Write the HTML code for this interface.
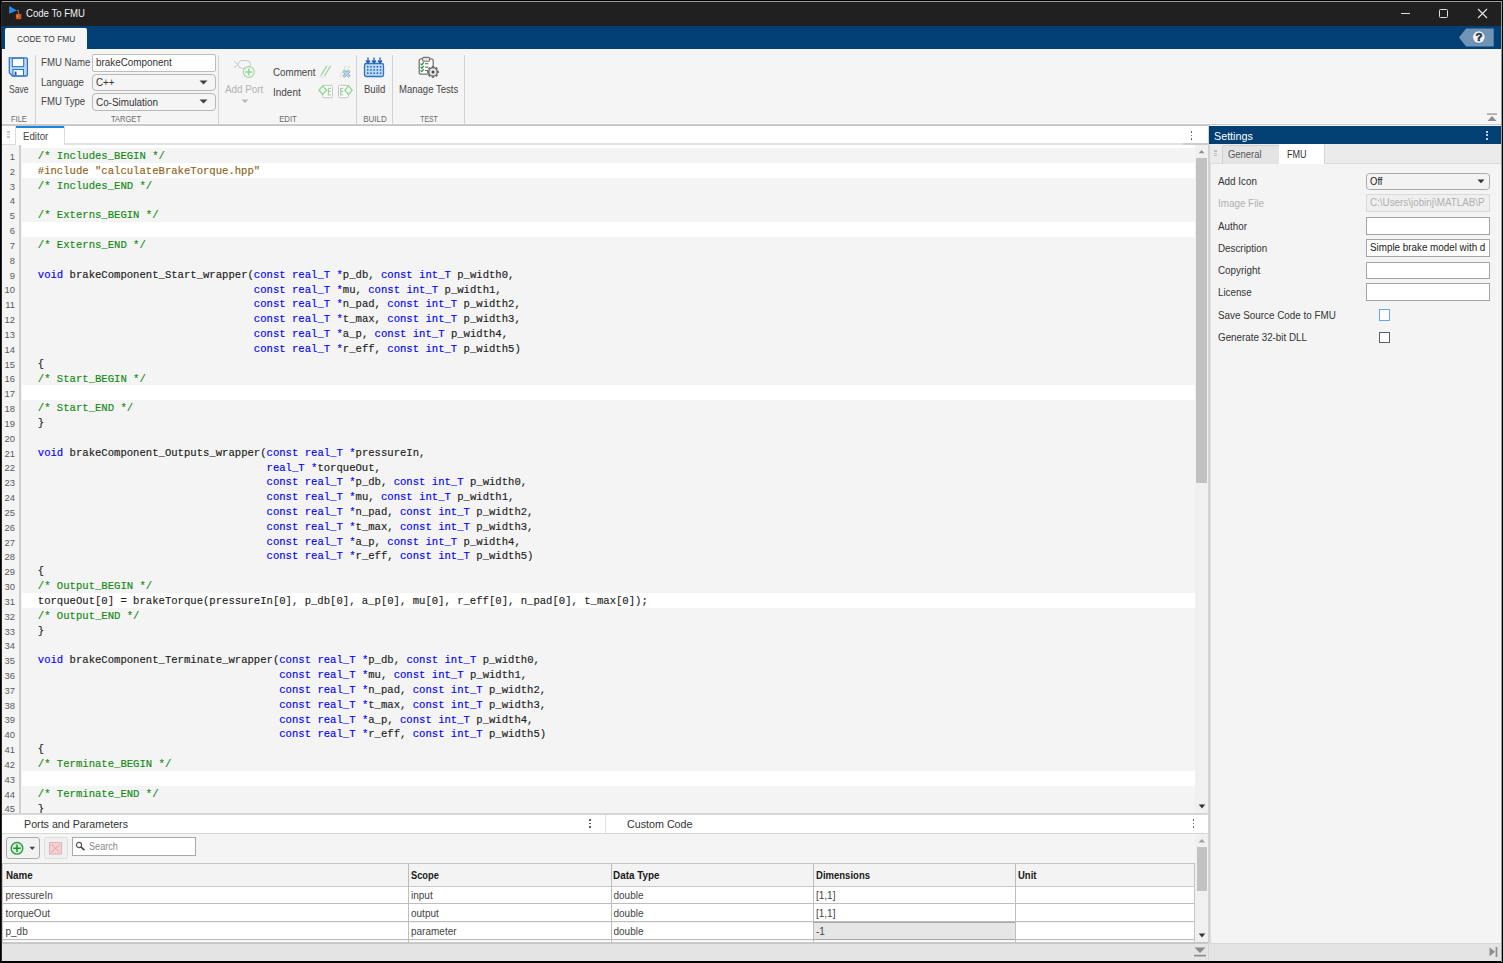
<!DOCTYPE html><html><head><meta charset="utf-8"><style>
*{margin:0;padding:0}
html,body{width:1503px;height:963px;overflow:hidden;background:#000}
.a{position:absolute;display:block}
.t{position:absolute;white-space:pre;transform-origin:0 0}
</style></head><body><div class="a" style="left:0px;top:0px;width:1503px;height:963px;background:#000;"></div><div class="a" style="left:1px;top:1px;width:1501px;height:1px;background:#9a9a9a;"></div><div class="a" style="left:1501px;top:1px;width:1px;height:961px;background:#9a9a9a;"></div><div class="a" style="left:1px;top:1px;width:1px;height:961px;background:#2a2a2a;"></div><div class="a" style="left:2px;top:2px;width:1499px;height:959px;background:#f4f4f4;"></div><div class="a" style="left:2px;top:2px;width:1499px;height:24px;background:#202020;"></div><svg class="a" style="left:4px;top:2px;" width="24" height="22" viewBox="4 2 24 22"><path d="M9.2 6 L16.8 10.4 L9.2 13.8 Z" fill="#2b8de6"/><path d="M16.8 10.4 H18.4 V13.9" stroke="#8a8a8a" stroke-width="0.9" fill="none"/><rect x="15.9" y="13.9" width="5.3" height="5.3" fill="#d9551c"/><rect x="17" y="15.2" width="0.9" height="1.8" fill="#c8d070"/></svg><div class="t" style="left:26.30px;top:7.81px;font-size:10.5px;line-height:10.5px;color:#f2f2f2;font-family:'Liberation Sans', sans-serif;transform:scaleX(0.9134);">Code To FMU</div><div class="a" style="left:1401px;top:13px;width:9px;height:1px;background:#e0e0e0;"></div><div class="a" style="left:1439px;top:9px;width:9px;height:9px;border:1px solid #e0e0e0;border-radius:1.5px;box-sizing:border-box;"></div><svg class="a" style="left:1477px;top:8px;" width="11" height="11" viewBox="0 0 11 11"><path d="M1 1 L10 10 M10 1 L1 10" stroke="#e8e8e8" stroke-width="1.1"/></svg><div class="a" style="left:2px;top:26px;width:1499px;height:23px;background:#023f74;"></div><div class="a" style="left:5px;top:28px;width:82px;height:21px;background:#f5f5f5;border-top:1px solid #ffffff;border-radius:2px 2px 0 0;box-sizing:border-box;"></div><div class="t" style="left:16.60px;top:34.30px;font-size:9.8px;line-height:9.8px;color:#3c3c3c;font-family:'Liberation Sans', sans-serif;transform:scaleX(0.8544);">CODE TO FMU</div><svg class="a" style="left:1458px;top:28px;" width="36" height="19" viewBox="0 0 36 19"><path d="M1 9.5 L8 0.5 L35.7 0.5 L35.7 18.5 L8 18.5 Z" fill="#7094b6"/><circle cx="20.8" cy="9.6" r="6.2" fill="#5d7fa6"/><circle cx="20.8" cy="9.1" r="5.9" fill="#f4f4f4"/><text x="20.9" y="13.3" font-size="11.5" font-weight="700" text-anchor="middle" fill="#26384c" stroke="#26384c" stroke-width="0.6" font-family="Liberation Sans">?</text></svg><div class="a" style="left:2px;top:49px;width:1499px;height:75px;background:#f5f5f5;"></div><div class="a" style="left:2px;top:123px;width:1499px;height:1px;background:#fbfbfb;"></div><div class="a" style="left:2px;top:124px;width:1499px;height:2px;background:#c9c9c9;"></div><svg class="a" style="left:1486px;top:113px;" width="12" height="9" viewBox="0 0 12 9"><rect x="1" y="0.5" width="10" height="1.2" fill="#8c8c8c"/><path d="M1.5 8 L6 3 L10.5 8 Z" fill="#8c8c8c"/></svg><div class="a" style="left:35px;top:55px;width:1px;height:69px;background:#d2d2d2;"></div><div class="a" style="left:218px;top:55px;width:1px;height:69px;background:#d2d2d2;"></div><div class="a" style="left:356px;top:55px;width:1px;height:69px;background:#d2d2d2;"></div><div class="a" style="left:392px;top:55px;width:1px;height:69px;background:#d2d2d2;"></div><div class="a" style="left:464px;top:55px;width:1px;height:69px;background:#d2d2d2;"></div><svg class="a" style="left:6px;top:54px;" width="26" height="26" viewBox="6 54 26 26"><path d="M9.3 57.9 H26.3 Q27.4 57.9 27.4 59 V74.9 Q27.4 76 26.3 76 H12.5 L9.3 72.8 Z" fill="#bfdcf7" stroke="#2f74c8" stroke-width="1.3"/><rect x="12.3" y="58.3" width="11.4" height="8.4" fill="#ffffff" stroke="#2f74c8" stroke-width="1.1"/><rect x="12.9" y="69.5" width="10.6" height="6.3" fill="#ffffff" stroke="#2f74c8" stroke-width="1.1"/><rect x="14.6" y="71.6" width="1.9" height="4" fill="#1f5fb0"/></svg><div class="t" style="left:8.60px;top:84.88px;font-size:10.3px;line-height:10.3px;color:#454545;font-family:'Liberation Sans', sans-serif;transform:scaleX(0.8261);">Save</div><div class="t" style="left:10.50px;top:113.80px;font-size:9.8px;line-height:9.8px;color:#6a6a6a;font-family:'Liberation Sans', sans-serif;transform:scaleX(0.7680);">FILE</div><div class="t" style="left:40.50px;top:58.13px;font-size:10px;line-height:10px;color:#454545;font-family:'Liberation Sans', sans-serif;transform:scaleX(0.9643);">FMU Name</div><div class="t" style="left:40.50px;top:77.83px;font-size:10px;line-height:10px;color:#454545;font-family:'Liberation Sans', sans-serif;transform:scaleX(0.9663);">Language</div><div class="t" style="left:40.50px;top:97.33px;font-size:10px;line-height:10px;color:#454545;font-family:'Liberation Sans', sans-serif;transform:scaleX(0.9622);">FMU Type</div><div class="a" style="left:91.5px;top:53.5px;width:124.5px;height:18px;background:#ffffff;border:1px solid #bdbdbd;border-radius:2px;box-sizing:border-box;"></div><div class="t" style="left:95.60px;top:58.13px;font-size:10px;line-height:10px;color:#333;font-family:'Liberation Sans', sans-serif;transform:scaleX(0.9880);">brakeComponent</div><div class="a" style="left:91.5px;top:73.5px;width:124.5px;height:17.5px;background:#f5f5f5;border:1px solid #b8b8b8;border-radius:4px;box-sizing:border-box;"></div><div class="t" style="left:95.60px;top:77.83px;font-size:10px;line-height:10px;color:#333;font-family:'Liberation Sans', sans-serif;transform:scaleX(0.9785);">C++</div><svg class="a" style="left:199px;top:79.5px;" width="9" height="5" viewBox="0 0 9 5"><path d="M0.5 0.5 L8.5 0.5 L4.5 4.5 Z" fill="#404040"/></svg><div class="a" style="left:91.5px;top:93.3px;width:124.5px;height:17.5px;background:#f5f5f5;border:1px solid #b8b8b8;border-radius:4px;box-sizing:border-box;"></div><div class="t" style="left:95.60px;top:97.63px;font-size:10px;line-height:10px;color:#333;font-family:'Liberation Sans', sans-serif;transform:scaleX(0.9871);">Co-Simulation</div><svg class="a" style="left:199px;top:99.3px;" width="9" height="5" viewBox="0 0 9 5"><path d="M0.5 0.5 L8.5 0.5 L4.5 4.5 Z" fill="#404040"/></svg><div class="t" style="left:111.00px;top:113.80px;font-size:9.8px;line-height:9.8px;color:#6a6a6a;font-family:'Liberation Sans', sans-serif;transform:scaleX(0.7689);">TARGET</div><svg class="a" style="left:228px;top:54px;" width="30" height="26" viewBox="228 54 30 26"><path d="M234 61.3 L237.8 64.5 L234 67.8" stroke="#c4c4c4" stroke-width="1" fill="none"/><rect x="238.2" y="60.5" width="12.3" height="7.9" rx="3.9" fill="none" stroke="#c8c8c8" stroke-width="1"/><circle cx="248.8" cy="72" r="5.4" fill="#effbef" stroke="#a4d6a4" stroke-width="1.2"/><path d="M248.8 68.6 V75.4 M245.4 72 H252.2" stroke="#98cf98" stroke-width="1.4"/></svg><div class="t" style="left:225.00px;top:84.73px;font-size:10px;line-height:10px;color:#b3b3b3;font-family:'Liberation Sans', sans-serif;transform:scaleX(0.9840);">Add Port</div><svg class="a" style="left:241px;top:99px;" width="8" height="5" viewBox="0 0 8 5"><path d="M0.5 0.5 L7.5 0.5 L4 4 Z" fill="#b8b8b8"/></svg><div class="t" style="left:272.60px;top:68.33px;font-size:10px;line-height:10px;color:#454545;font-family:'Liberation Sans', sans-serif;transform:scaleX(0.9802);">Comment</div><div class="t" style="left:272.60px;top:87.93px;font-size:10px;line-height:10px;color:#454545;font-family:'Liberation Sans', sans-serif;transform:scaleX(0.9960);">Indent</div><svg class="a" style="left:315px;top:62px;" width="40" height="38" viewBox="315 62 40 38"><path d="M320.8 75.8 L326.8 65.9 M324.5 75.8 L330.6 65.9" stroke="#a6d6a6" stroke-width="1.4"/><path d="M319.5 77.3 H326.5" stroke="#e2e2e2" stroke-width="0.8"/><path d="M340.2 75.8 L346.2 65.9 M343.4 75.8 L349.7 65.9" stroke="#cfe9cf" stroke-width="1.2"/><path d="M339 77.3 H344" stroke="#e6e6e6" stroke-width="0.8"/><path d="M343.6 70.8 L349.6 76.8 M349.6 70.8 L343.6 76.8" stroke="#8a9aa8" stroke-width="3"/><path d="M343.6 70.8 L349.6 76.8 M349.6 70.8 L343.6 76.8" stroke="#b5d6f0" stroke-width="1.8"/><rect x="322.6" y="85.3" width="9.8" height="12.4" rx="1.3" fill="#ffffff" stroke="#c4c4c4" stroke-width="1"/><path d="M327.8 88.3 H331 M327.8 91.5 H331 M327.8 94.8 H331 M328.3 88.3 V94.8" stroke="#a0d4a0" stroke-width="1.3"/><path d="M319 90.2 L322.7 85.9 L326.4 90.2 L322.7 94.5 Z" fill="#f0fbf0" stroke="#9ed49e" stroke-width="1.4"/><rect x="338.5" y="85.3" width="9.8" height="12.4" rx="1.3" fill="#ffffff" stroke="#c4c4c4" stroke-width="1"/><path d="M340.2 88.3 H343.4 M340.2 91.5 H343.4 M340.2 94.8 H343.4 M340.7 88.3 V94.8" stroke="#a0d4a0" stroke-width="1.3"/><path d="M344.8 90.2 L348.5 85.9 L352.2 90.2 L348.5 94.5 Z" fill="#f0fbf0" stroke="#9ed49e" stroke-width="1.4"/></svg><div class="t" style="left:287.50px;top:113.80px;font-size:9.8px;line-height:9.8px;color:#6a6a6a;font-family:'Liberation Sans', sans-serif;transform:translateX(-50%) scaleX(0.7927);transform-origin:50% 0;">EDIT</div><svg class="a" style="left:363px;top:57px;" width="22" height="21" viewBox="0 0 22 21"><rect x="1.5" y="6.5" width="19" height="13" rx="1.8" fill="#bcdaf6" stroke="#2f74c8" stroke-width="1.3"/><rect x="4.0" y="9.0" width="1.5" height="1.5" fill="#1f5fb0"/><rect x="7.2" y="9.0" width="1.5" height="1.5" fill="#1f5fb0"/><rect x="10.4" y="9.0" width="1.5" height="1.5" fill="#1f5fb0"/><rect x="13.6" y="9.0" width="1.5" height="1.5" fill="#1f5fb0"/><rect x="16.8" y="9.0" width="1.5" height="1.5" fill="#1f5fb0"/><rect x="4.0" y="12.2" width="1.5" height="1.5" fill="#1f5fb0"/><rect x="7.2" y="12.2" width="1.5" height="1.5" fill="#1f5fb0"/><rect x="10.4" y="12.2" width="1.5" height="1.5" fill="#1f5fb0"/><rect x="13.6" y="12.2" width="1.5" height="1.5" fill="#1f5fb0"/><rect x="16.8" y="12.2" width="1.5" height="1.5" fill="#1f5fb0"/><rect x="4.0" y="15.4" width="1.5" height="1.5" fill="#1f5fb0"/><rect x="7.2" y="15.4" width="1.5" height="1.5" fill="#1f5fb0"/><rect x="10.4" y="15.4" width="1.5" height="1.5" fill="#1f5fb0"/><rect x="13.6" y="15.4" width="1.5" height="1.5" fill="#1f5fb0"/><rect x="16.8" y="15.4" width="1.5" height="1.5" fill="#1f5fb0"/><path d="M5 0.5 V5.5 M3 3.5 L5 6 L7 3.5" stroke="#1f5fb0" stroke-width="1.3" fill="none"/><path d="M11 0.5 V5.5 M9 3.5 L11 6 L13 3.5" stroke="#1f5fb0" stroke-width="1.3" fill="none"/><path d="M17 0.5 V5.5 M15 3.5 L17 6 L19 3.5" stroke="#1f5fb0" stroke-width="1.3" fill="none"/></svg><div class="t" style="left:363.80px;top:85.03px;font-size:10px;line-height:10px;color:#454545;font-family:'Liberation Sans', sans-serif;transform:scaleX(0.9528);">Build</div><div class="t" style="left:374.50px;top:113.80px;font-size:9.8px;line-height:9.8px;color:#6a6a6a;font-family:'Liberation Sans', sans-serif;transform:translateX(-50%) scaleX(0.8212);transform-origin:50% 0;">BUILD</div><svg class="a" style="left:410px;top:52px;" width="35" height="30" viewBox="410 52 35 30"><rect x="419.2" y="58.9" width="14" height="15.3" rx="2" fill="#ffffff" stroke="#777" stroke-width="1.3"/><rect x="422.6" y="57.4" width="7" height="3.9" rx="1" fill="#e2e2e2" stroke="#777" stroke-width="1.1"/><path d="M420.6 63.6 L421.8 64.8 L423.8 62.4" stroke="#23963a" stroke-width="1.3" fill="none"/><path d="M425 63.7 H428.4" stroke="#6a6a6a" stroke-width="1.1"/><path d="M420.6 67.0 L421.8 68.2 L423.8 65.8" stroke="#23963a" stroke-width="1.3" fill="none"/><path d="M425 67.1 H428.4" stroke="#6a6a6a" stroke-width="1.1"/><path d="M420.6 70.4 L421.8 71.6 L423.8 69.2" stroke="#23963a" stroke-width="1.3" fill="none"/><path d="M425 70.5 H428.4" stroke="#6a6a6a" stroke-width="1.1"/><rect x="431.80" y="66.00" width="2.4" height="3" fill="#6a6a6a" transform="rotate(0 433 71.9)"/><rect x="431.80" y="66.00" width="2.4" height="3" fill="#6a6a6a" transform="rotate(45 433 71.9)"/><rect x="431.80" y="66.00" width="2.4" height="3" fill="#6a6a6a" transform="rotate(90 433 71.9)"/><rect x="431.80" y="66.00" width="2.4" height="3" fill="#6a6a6a" transform="rotate(135 433 71.9)"/><rect x="431.80" y="66.00" width="2.4" height="3" fill="#6a6a6a" transform="rotate(180 433 71.9)"/><rect x="431.80" y="66.00" width="2.4" height="3" fill="#6a6a6a" transform="rotate(225 433 71.9)"/><rect x="431.80" y="66.00" width="2.4" height="3" fill="#6a6a6a" transform="rotate(270 433 71.9)"/><rect x="431.80" y="66.00" width="2.4" height="3" fill="#6a6a6a" transform="rotate(315 433 71.9)"/><circle cx="433" cy="71.9" r="4.2" fill="#e4e4e4" stroke="#6a6a6a" stroke-width="1.3"/><circle cx="433" cy="71.9" r="1.5" fill="#4a4a4a"/></svg><div class="t" style="left:399.00px;top:85.03px;font-size:10px;line-height:10px;color:#454545;font-family:'Liberation Sans', sans-serif;transform:scaleX(0.9536);">Manage Tests</div><div class="t" style="left:428.70px;top:113.80px;font-size:9.8px;line-height:9.8px;color:#6a6a6a;font-family:'Liberation Sans', sans-serif;transform:translateX(-50%) scaleX(0.6987);transform-origin:50% 0;">TEST</div><div class="a" style="left:2px;top:126px;width:1206px;height:19px;background:#ffffff;"></div><div class="a" style="left:2px;top:126px;width:14px;height:19px;background:#ffffff;border-right:1px solid #dcdcdc;border-bottom:1px solid #dcdcdc;box-sizing:border-box;"></div><div class="a" style="left:7.2px;top:131.4px;width:2.8px;height:1.8px;background:#c4c4c4;"></div><div class="a" style="left:7.2px;top:133.6px;width:2.8px;height:1.8px;background:#c4c4c4;"></div><div class="a" style="left:7.2px;top:135.8px;width:2.8px;height:1.8px;background:#c4c4c4;"></div><div class="a" style="left:16px;top:126px;width:48px;height:2px;background:#1a86e0;"></div><div class="a" style="left:64px;top:126px;width:1px;height:19px;background:#dcdcdc;"></div><div class="a" style="left:65px;top:143px;width:1130px;height:2px;background:#e3e3e3;"></div><div class="a" style="left:1183px;top:143px;width:25px;height:2px;background:#cdcdcd;"></div><div class="t" style="left:22.60px;top:132.33px;font-size:10px;line-height:10px;color:#454545;font-family:'Liberation Sans', sans-serif;transform:scaleX(0.9684);">Editor</div><div class="a" style="left:1190.8px;top:131.2px;width:1.7px;height:1.7px;background:#444444;border-radius:50%;"></div><div class="a" style="left:1190.8px;top:134.6px;width:1.7px;height:1.7px;background:#444444;border-radius:50%;"></div><div class="a" style="left:1190.8px;top:138.0px;width:1.7px;height:1.7px;background:#444444;border-radius:50%;"></div><div class="a" style="left:2px;top:144.5px;width:1193px;height:668.5px;background:#f4f4f4;"></div><div class="a" style="left:22px;top:144.5px;width:1173px;height:3.6999999999999886px;background:#ffffff;"></div><div class="a" style="left:19px;top:144.5px;width:2px;height:668.5px;background:#cfcfcf;"></div><div class="a" style="left:0;top:0;width:1195px;height:813px;overflow:hidden"><div class="a" style="left:22px;top:163.03px;width:1173px;height:14.83px;background:#ffffff;"></div><div class="a" style="left:22px;top:222.35px;width:1173px;height:14.83px;background:#ffffff;"></div><div class="a" style="left:22px;top:385.48px;width:1173px;height:14.83px;background:#ffffff;"></div><div class="a" style="left:22px;top:593.1px;width:1173px;height:14.83px;background:#ffffff;"></div><div class="a" style="left:22px;top:771.06px;width:1173px;height:14.83px;background:#ffffff;"></div><div class="t" style="left:15.00px;top:151.94px;font-size:9.4px;line-height:9.4px;color:#5a5a5a;font-family:'Liberation Sans', sans-serif;text-align:right;width:0;direction:rtl;">1</div><div class="t" style="left:37.80px;top:151.08px;font-size:10.6px;line-height:10.6px;color:#212121;font-family:'Liberation Mono', monospace;letter-spacing:-0.0033px;-webkit-text-stroke:0.15px currentColor;"><span style="color:#138a13">/* Includes_BEGIN */</span></div><div class="t" style="left:15.00px;top:166.77px;font-size:9.4px;line-height:9.4px;color:#5a5a5a;font-family:'Liberation Sans', sans-serif;text-align:right;width:0;direction:rtl;">2</div><div class="t" style="left:37.80px;top:165.91px;font-size:10.6px;line-height:10.6px;color:#212121;font-family:'Liberation Mono', monospace;letter-spacing:-0.0033px;-webkit-text-stroke:0.15px currentColor;"><span style="color:#8e6414">#include &quot;calculateBrakeTorque.hpp&quot;</span></div><div class="t" style="left:15.00px;top:181.60px;font-size:9.4px;line-height:9.4px;color:#5a5a5a;font-family:'Liberation Sans', sans-serif;text-align:right;width:0;direction:rtl;">3</div><div class="t" style="left:37.80px;top:180.74px;font-size:10.6px;line-height:10.6px;color:#212121;font-family:'Liberation Mono', monospace;letter-spacing:-0.0033px;-webkit-text-stroke:0.15px currentColor;"><span style="color:#138a13">/* Includes_END */</span></div><div class="t" style="left:15.00px;top:196.43px;font-size:9.4px;line-height:9.4px;color:#5a5a5a;font-family:'Liberation Sans', sans-serif;text-align:right;width:0;direction:rtl;">4</div><div class="t" style="left:15.00px;top:211.26px;font-size:9.4px;line-height:9.4px;color:#5a5a5a;font-family:'Liberation Sans', sans-serif;text-align:right;width:0;direction:rtl;">5</div><div class="t" style="left:37.80px;top:210.40px;font-size:10.6px;line-height:10.6px;color:#212121;font-family:'Liberation Mono', monospace;letter-spacing:-0.0033px;-webkit-text-stroke:0.15px currentColor;"><span style="color:#138a13">/* Externs_BEGIN */</span></div><div class="t" style="left:15.00px;top:226.09px;font-size:9.4px;line-height:9.4px;color:#5a5a5a;font-family:'Liberation Sans', sans-serif;text-align:right;width:0;direction:rtl;">6</div><div class="t" style="left:15.00px;top:240.92px;font-size:9.4px;line-height:9.4px;color:#5a5a5a;font-family:'Liberation Sans', sans-serif;text-align:right;width:0;direction:rtl;">7</div><div class="t" style="left:37.80px;top:240.06px;font-size:10.6px;line-height:10.6px;color:#212121;font-family:'Liberation Mono', monospace;letter-spacing:-0.0033px;-webkit-text-stroke:0.15px currentColor;"><span style="color:#138a13">/* Externs_END */</span></div><div class="t" style="left:15.00px;top:255.75px;font-size:9.4px;line-height:9.4px;color:#5a5a5a;font-family:'Liberation Sans', sans-serif;text-align:right;width:0;direction:rtl;">8</div><div class="t" style="left:15.00px;top:270.58px;font-size:9.4px;line-height:9.4px;color:#5a5a5a;font-family:'Liberation Sans', sans-serif;text-align:right;width:0;direction:rtl;">9</div><div class="t" style="left:37.80px;top:269.72px;font-size:10.6px;line-height:10.6px;color:#212121;font-family:'Liberation Mono', monospace;letter-spacing:-0.0033px;-webkit-text-stroke:0.15px currentColor;"><span style="color:#0000ff">void</span> brakeComponent_Start_wrapper(<span style="color:#0000ff">const</span> <span style="color:#0000ff">real_T</span> <span style="color:#0000ff">*</span>p_db, <span style="color:#0000ff">const</span> <span style="color:#0000ff">int_T</span> p_width0,</div><div class="t" style="left:15.00px;top:285.41px;font-size:9.4px;line-height:9.4px;color:#5a5a5a;font-family:'Liberation Sans', sans-serif;text-align:right;width:0;direction:rtl;">10</div><div class="t" style="left:37.80px;top:284.55px;font-size:10.6px;line-height:10.6px;color:#212121;font-family:'Liberation Mono', monospace;letter-spacing:-0.0033px;-webkit-text-stroke:0.15px currentColor;">                                  <span style="color:#0000ff">const</span> <span style="color:#0000ff">real_T</span> <span style="color:#0000ff">*</span>mu, <span style="color:#0000ff">const</span> <span style="color:#0000ff">int_T</span> p_width1,</div><div class="t" style="left:15.00px;top:300.24px;font-size:9.4px;line-height:9.4px;color:#5a5a5a;font-family:'Liberation Sans', sans-serif;text-align:right;width:0;direction:rtl;">11</div><div class="t" style="left:37.80px;top:299.38px;font-size:10.6px;line-height:10.6px;color:#212121;font-family:'Liberation Mono', monospace;letter-spacing:-0.0033px;-webkit-text-stroke:0.15px currentColor;">                                  <span style="color:#0000ff">const</span> <span style="color:#0000ff">real_T</span> <span style="color:#0000ff">*</span>n_pad, <span style="color:#0000ff">const</span> <span style="color:#0000ff">int_T</span> p_width2,</div><div class="t" style="left:15.00px;top:315.07px;font-size:9.4px;line-height:9.4px;color:#5a5a5a;font-family:'Liberation Sans', sans-serif;text-align:right;width:0;direction:rtl;">12</div><div class="t" style="left:37.80px;top:314.21px;font-size:10.6px;line-height:10.6px;color:#212121;font-family:'Liberation Mono', monospace;letter-spacing:-0.0033px;-webkit-text-stroke:0.15px currentColor;">                                  <span style="color:#0000ff">const</span> <span style="color:#0000ff">real_T</span> <span style="color:#0000ff">*</span>t_max, <span style="color:#0000ff">const</span> <span style="color:#0000ff">int_T</span> p_width3,</div><div class="t" style="left:15.00px;top:329.90px;font-size:9.4px;line-height:9.4px;color:#5a5a5a;font-family:'Liberation Sans', sans-serif;text-align:right;width:0;direction:rtl;">13</div><div class="t" style="left:37.80px;top:329.04px;font-size:10.6px;line-height:10.6px;color:#212121;font-family:'Liberation Mono', monospace;letter-spacing:-0.0033px;-webkit-text-stroke:0.15px currentColor;">                                  <span style="color:#0000ff">const</span> <span style="color:#0000ff">real_T</span> <span style="color:#0000ff">*</span>a_p, <span style="color:#0000ff">const</span> <span style="color:#0000ff">int_T</span> p_width4,</div><div class="t" style="left:15.00px;top:344.73px;font-size:9.4px;line-height:9.4px;color:#5a5a5a;font-family:'Liberation Sans', sans-serif;text-align:right;width:0;direction:rtl;">14</div><div class="t" style="left:37.80px;top:343.87px;font-size:10.6px;line-height:10.6px;color:#212121;font-family:'Liberation Mono', monospace;letter-spacing:-0.0033px;-webkit-text-stroke:0.15px currentColor;">                                  <span style="color:#0000ff">const</span> <span style="color:#0000ff">real_T</span> <span style="color:#0000ff">*</span>r_eff, <span style="color:#0000ff">const</span> <span style="color:#0000ff">int_T</span> p_width5)</div><div class="t" style="left:15.00px;top:359.56px;font-size:9.4px;line-height:9.4px;color:#5a5a5a;font-family:'Liberation Sans', sans-serif;text-align:right;width:0;direction:rtl;">15</div><div class="t" style="left:37.80px;top:358.70px;font-size:10.6px;line-height:10.6px;color:#212121;font-family:'Liberation Mono', monospace;letter-spacing:-0.0033px;-webkit-text-stroke:0.15px currentColor;">{</div><div class="t" style="left:15.00px;top:374.39px;font-size:9.4px;line-height:9.4px;color:#5a5a5a;font-family:'Liberation Sans', sans-serif;text-align:right;width:0;direction:rtl;">16</div><div class="t" style="left:37.80px;top:373.53px;font-size:10.6px;line-height:10.6px;color:#212121;font-family:'Liberation Mono', monospace;letter-spacing:-0.0033px;-webkit-text-stroke:0.15px currentColor;"><span style="color:#138a13">/* Start_BEGIN */</span></div><div class="t" style="left:15.00px;top:389.22px;font-size:9.4px;line-height:9.4px;color:#5a5a5a;font-family:'Liberation Sans', sans-serif;text-align:right;width:0;direction:rtl;">17</div><div class="t" style="left:15.00px;top:404.05px;font-size:9.4px;line-height:9.4px;color:#5a5a5a;font-family:'Liberation Sans', sans-serif;text-align:right;width:0;direction:rtl;">18</div><div class="t" style="left:37.80px;top:403.19px;font-size:10.6px;line-height:10.6px;color:#212121;font-family:'Liberation Mono', monospace;letter-spacing:-0.0033px;-webkit-text-stroke:0.15px currentColor;"><span style="color:#138a13">/* Start_END */</span></div><div class="t" style="left:15.00px;top:418.88px;font-size:9.4px;line-height:9.4px;color:#5a5a5a;font-family:'Liberation Sans', sans-serif;text-align:right;width:0;direction:rtl;">19</div><div class="t" style="left:37.80px;top:418.02px;font-size:10.6px;line-height:10.6px;color:#212121;font-family:'Liberation Mono', monospace;letter-spacing:-0.0033px;-webkit-text-stroke:0.15px currentColor;">}</div><div class="t" style="left:15.00px;top:433.71px;font-size:9.4px;line-height:9.4px;color:#5a5a5a;font-family:'Liberation Sans', sans-serif;text-align:right;width:0;direction:rtl;">20</div><div class="t" style="left:15.00px;top:448.54px;font-size:9.4px;line-height:9.4px;color:#5a5a5a;font-family:'Liberation Sans', sans-serif;text-align:right;width:0;direction:rtl;">21</div><div class="t" style="left:37.80px;top:447.68px;font-size:10.6px;line-height:10.6px;color:#212121;font-family:'Liberation Mono', monospace;letter-spacing:-0.0033px;-webkit-text-stroke:0.15px currentColor;"><span style="color:#0000ff">void</span> brakeComponent_Outputs_wrapper(<span style="color:#0000ff">const</span> <span style="color:#0000ff">real_T</span> <span style="color:#0000ff">*</span>pressureIn,</div><div class="t" style="left:15.00px;top:463.37px;font-size:9.4px;line-height:9.4px;color:#5a5a5a;font-family:'Liberation Sans', sans-serif;text-align:right;width:0;direction:rtl;">22</div><div class="t" style="left:37.80px;top:462.51px;font-size:10.6px;line-height:10.6px;color:#212121;font-family:'Liberation Mono', monospace;letter-spacing:-0.0033px;-webkit-text-stroke:0.15px currentColor;">                                    <span style="color:#0000ff">real_T</span> <span style="color:#0000ff">*</span>torqueOut,</div><div class="t" style="left:15.00px;top:478.20px;font-size:9.4px;line-height:9.4px;color:#5a5a5a;font-family:'Liberation Sans', sans-serif;text-align:right;width:0;direction:rtl;">23</div><div class="t" style="left:37.80px;top:477.34px;font-size:10.6px;line-height:10.6px;color:#212121;font-family:'Liberation Mono', monospace;letter-spacing:-0.0033px;-webkit-text-stroke:0.15px currentColor;">                                    <span style="color:#0000ff">const</span> <span style="color:#0000ff">real_T</span> <span style="color:#0000ff">*</span>p_db, <span style="color:#0000ff">const</span> <span style="color:#0000ff">int_T</span> p_width0,</div><div class="t" style="left:15.00px;top:493.03px;font-size:9.4px;line-height:9.4px;color:#5a5a5a;font-family:'Liberation Sans', sans-serif;text-align:right;width:0;direction:rtl;">24</div><div class="t" style="left:37.80px;top:492.17px;font-size:10.6px;line-height:10.6px;color:#212121;font-family:'Liberation Mono', monospace;letter-spacing:-0.0033px;-webkit-text-stroke:0.15px currentColor;">                                    <span style="color:#0000ff">const</span> <span style="color:#0000ff">real_T</span> <span style="color:#0000ff">*</span>mu, <span style="color:#0000ff">const</span> <span style="color:#0000ff">int_T</span> p_width1,</div><div class="t" style="left:15.00px;top:507.86px;font-size:9.4px;line-height:9.4px;color:#5a5a5a;font-family:'Liberation Sans', sans-serif;text-align:right;width:0;direction:rtl;">25</div><div class="t" style="left:37.80px;top:507.00px;font-size:10.6px;line-height:10.6px;color:#212121;font-family:'Liberation Mono', monospace;letter-spacing:-0.0033px;-webkit-text-stroke:0.15px currentColor;">                                    <span style="color:#0000ff">const</span> <span style="color:#0000ff">real_T</span> <span style="color:#0000ff">*</span>n_pad, <span style="color:#0000ff">const</span> <span style="color:#0000ff">int_T</span> p_width2,</div><div class="t" style="left:15.00px;top:522.69px;font-size:9.4px;line-height:9.4px;color:#5a5a5a;font-family:'Liberation Sans', sans-serif;text-align:right;width:0;direction:rtl;">26</div><div class="t" style="left:37.80px;top:521.83px;font-size:10.6px;line-height:10.6px;color:#212121;font-family:'Liberation Mono', monospace;letter-spacing:-0.0033px;-webkit-text-stroke:0.15px currentColor;">                                    <span style="color:#0000ff">const</span> <span style="color:#0000ff">real_T</span> <span style="color:#0000ff">*</span>t_max, <span style="color:#0000ff">const</span> <span style="color:#0000ff">int_T</span> p_width3,</div><div class="t" style="left:15.00px;top:537.52px;font-size:9.4px;line-height:9.4px;color:#5a5a5a;font-family:'Liberation Sans', sans-serif;text-align:right;width:0;direction:rtl;">27</div><div class="t" style="left:37.80px;top:536.66px;font-size:10.6px;line-height:10.6px;color:#212121;font-family:'Liberation Mono', monospace;letter-spacing:-0.0033px;-webkit-text-stroke:0.15px currentColor;">                                    <span style="color:#0000ff">const</span> <span style="color:#0000ff">real_T</span> <span style="color:#0000ff">*</span>a_p, <span style="color:#0000ff">const</span> <span style="color:#0000ff">int_T</span> p_width4,</div><div class="t" style="left:15.00px;top:552.35px;font-size:9.4px;line-height:9.4px;color:#5a5a5a;font-family:'Liberation Sans', sans-serif;text-align:right;width:0;direction:rtl;">28</div><div class="t" style="left:37.80px;top:551.49px;font-size:10.6px;line-height:10.6px;color:#212121;font-family:'Liberation Mono', monospace;letter-spacing:-0.0033px;-webkit-text-stroke:0.15px currentColor;">                                    <span style="color:#0000ff">const</span> <span style="color:#0000ff">real_T</span> <span style="color:#0000ff">*</span>r_eff, <span style="color:#0000ff">const</span> <span style="color:#0000ff">int_T</span> p_width5)</div><div class="t" style="left:15.00px;top:567.18px;font-size:9.4px;line-height:9.4px;color:#5a5a5a;font-family:'Liberation Sans', sans-serif;text-align:right;width:0;direction:rtl;">29</div><div class="t" style="left:37.80px;top:566.32px;font-size:10.6px;line-height:10.6px;color:#212121;font-family:'Liberation Mono', monospace;letter-spacing:-0.0033px;-webkit-text-stroke:0.15px currentColor;">{</div><div class="t" style="left:15.00px;top:582.01px;font-size:9.4px;line-height:9.4px;color:#5a5a5a;font-family:'Liberation Sans', sans-serif;text-align:right;width:0;direction:rtl;">30</div><div class="t" style="left:37.80px;top:581.15px;font-size:10.6px;line-height:10.6px;color:#212121;font-family:'Liberation Mono', monospace;letter-spacing:-0.0033px;-webkit-text-stroke:0.15px currentColor;"><span style="color:#138a13">/* Output_BEGIN */</span></div><div class="t" style="left:15.00px;top:596.84px;font-size:9.4px;line-height:9.4px;color:#5a5a5a;font-family:'Liberation Sans', sans-serif;text-align:right;width:0;direction:rtl;">31</div><div class="t" style="left:37.80px;top:595.98px;font-size:10.6px;line-height:10.6px;color:#212121;font-family:'Liberation Mono', monospace;letter-spacing:-0.0033px;-webkit-text-stroke:0.15px currentColor;">torqueOut[0] = brakeTorque(pressureIn[0], p_db[0], a_p[0], mu[0], r_eff[0], n_pad[0], t_max[0]);</div><div class="t" style="left:15.00px;top:611.67px;font-size:9.4px;line-height:9.4px;color:#5a5a5a;font-family:'Liberation Sans', sans-serif;text-align:right;width:0;direction:rtl;">32</div><div class="t" style="left:37.80px;top:610.81px;font-size:10.6px;line-height:10.6px;color:#212121;font-family:'Liberation Mono', monospace;letter-spacing:-0.0033px;-webkit-text-stroke:0.15px currentColor;"><span style="color:#138a13">/* Output_END */</span></div><div class="t" style="left:15.00px;top:626.50px;font-size:9.4px;line-height:9.4px;color:#5a5a5a;font-family:'Liberation Sans', sans-serif;text-align:right;width:0;direction:rtl;">33</div><div class="t" style="left:37.80px;top:625.64px;font-size:10.6px;line-height:10.6px;color:#212121;font-family:'Liberation Mono', monospace;letter-spacing:-0.0033px;-webkit-text-stroke:0.15px currentColor;">}</div><div class="t" style="left:15.00px;top:641.33px;font-size:9.4px;line-height:9.4px;color:#5a5a5a;font-family:'Liberation Sans', sans-serif;text-align:right;width:0;direction:rtl;">34</div><div class="t" style="left:15.00px;top:656.16px;font-size:9.4px;line-height:9.4px;color:#5a5a5a;font-family:'Liberation Sans', sans-serif;text-align:right;width:0;direction:rtl;">35</div><div class="t" style="left:37.80px;top:655.30px;font-size:10.6px;line-height:10.6px;color:#212121;font-family:'Liberation Mono', monospace;letter-spacing:-0.0033px;-webkit-text-stroke:0.15px currentColor;"><span style="color:#0000ff">void</span> brakeComponent_Terminate_wrapper(<span style="color:#0000ff">const</span> <span style="color:#0000ff">real_T</span> <span style="color:#0000ff">*</span>p_db, <span style="color:#0000ff">const</span> <span style="color:#0000ff">int_T</span> p_width0,</div><div class="t" style="left:15.00px;top:670.99px;font-size:9.4px;line-height:9.4px;color:#5a5a5a;font-family:'Liberation Sans', sans-serif;text-align:right;width:0;direction:rtl;">36</div><div class="t" style="left:37.80px;top:670.13px;font-size:10.6px;line-height:10.6px;color:#212121;font-family:'Liberation Mono', monospace;letter-spacing:-0.0033px;-webkit-text-stroke:0.15px currentColor;">                                      <span style="color:#0000ff">const</span> <span style="color:#0000ff">real_T</span> <span style="color:#0000ff">*</span>mu, <span style="color:#0000ff">const</span> <span style="color:#0000ff">int_T</span> p_width1,</div><div class="t" style="left:15.00px;top:685.82px;font-size:9.4px;line-height:9.4px;color:#5a5a5a;font-family:'Liberation Sans', sans-serif;text-align:right;width:0;direction:rtl;">37</div><div class="t" style="left:37.80px;top:684.96px;font-size:10.6px;line-height:10.6px;color:#212121;font-family:'Liberation Mono', monospace;letter-spacing:-0.0033px;-webkit-text-stroke:0.15px currentColor;">                                      <span style="color:#0000ff">const</span> <span style="color:#0000ff">real_T</span> <span style="color:#0000ff">*</span>n_pad, <span style="color:#0000ff">const</span> <span style="color:#0000ff">int_T</span> p_width2,</div><div class="t" style="left:15.00px;top:700.65px;font-size:9.4px;line-height:9.4px;color:#5a5a5a;font-family:'Liberation Sans', sans-serif;text-align:right;width:0;direction:rtl;">38</div><div class="t" style="left:37.80px;top:699.79px;font-size:10.6px;line-height:10.6px;color:#212121;font-family:'Liberation Mono', monospace;letter-spacing:-0.0033px;-webkit-text-stroke:0.15px currentColor;">                                      <span style="color:#0000ff">const</span> <span style="color:#0000ff">real_T</span> <span style="color:#0000ff">*</span>t_max, <span style="color:#0000ff">const</span> <span style="color:#0000ff">int_T</span> p_width3,</div><div class="t" style="left:15.00px;top:715.48px;font-size:9.4px;line-height:9.4px;color:#5a5a5a;font-family:'Liberation Sans', sans-serif;text-align:right;width:0;direction:rtl;">39</div><div class="t" style="left:37.80px;top:714.62px;font-size:10.6px;line-height:10.6px;color:#212121;font-family:'Liberation Mono', monospace;letter-spacing:-0.0033px;-webkit-text-stroke:0.15px currentColor;">                                      <span style="color:#0000ff">const</span> <span style="color:#0000ff">real_T</span> <span style="color:#0000ff">*</span>a_p, <span style="color:#0000ff">const</span> <span style="color:#0000ff">int_T</span> p_width4,</div><div class="t" style="left:15.00px;top:730.31px;font-size:9.4px;line-height:9.4px;color:#5a5a5a;font-family:'Liberation Sans', sans-serif;text-align:right;width:0;direction:rtl;">40</div><div class="t" style="left:37.80px;top:729.45px;font-size:10.6px;line-height:10.6px;color:#212121;font-family:'Liberation Mono', monospace;letter-spacing:-0.0033px;-webkit-text-stroke:0.15px currentColor;">                                      <span style="color:#0000ff">const</span> <span style="color:#0000ff">real_T</span> <span style="color:#0000ff">*</span>r_eff, <span style="color:#0000ff">const</span> <span style="color:#0000ff">int_T</span> p_width5)</div><div class="t" style="left:15.00px;top:745.14px;font-size:9.4px;line-height:9.4px;color:#5a5a5a;font-family:'Liberation Sans', sans-serif;text-align:right;width:0;direction:rtl;">41</div><div class="t" style="left:37.80px;top:744.28px;font-size:10.6px;line-height:10.6px;color:#212121;font-family:'Liberation Mono', monospace;letter-spacing:-0.0033px;-webkit-text-stroke:0.15px currentColor;">{</div><div class="t" style="left:15.00px;top:759.97px;font-size:9.4px;line-height:9.4px;color:#5a5a5a;font-family:'Liberation Sans', sans-serif;text-align:right;width:0;direction:rtl;">42</div><div class="t" style="left:37.80px;top:759.11px;font-size:10.6px;line-height:10.6px;color:#212121;font-family:'Liberation Mono', monospace;letter-spacing:-0.0033px;-webkit-text-stroke:0.15px currentColor;"><span style="color:#138a13">/* Terminate_BEGIN */</span></div><div class="t" style="left:15.00px;top:774.80px;font-size:9.4px;line-height:9.4px;color:#5a5a5a;font-family:'Liberation Sans', sans-serif;text-align:right;width:0;direction:rtl;">43</div><div class="t" style="left:15.00px;top:789.63px;font-size:9.4px;line-height:9.4px;color:#5a5a5a;font-family:'Liberation Sans', sans-serif;text-align:right;width:0;direction:rtl;">44</div><div class="t" style="left:37.80px;top:788.77px;font-size:10.6px;line-height:10.6px;color:#212121;font-family:'Liberation Mono', monospace;letter-spacing:-0.0033px;-webkit-text-stroke:0.15px currentColor;"><span style="color:#138a13">/* Terminate_END */</span></div><div class="t" style="left:15.00px;top:804.46px;font-size:9.4px;line-height:9.4px;color:#5a5a5a;font-family:'Liberation Sans', sans-serif;text-align:right;width:0;direction:rtl;">45</div><div class="t" style="left:37.80px;top:803.60px;font-size:10.6px;line-height:10.6px;color:#212121;font-family:'Liberation Mono', monospace;letter-spacing:-0.0033px;-webkit-text-stroke:0.15px currentColor;">}</div></div><div class="a" style="left:1195px;top:144.5px;width:13px;height:668.5px;background:#f0f0f0;"></div><svg class="a" style="left:1192px;top:147px;" width="18" height="10" viewBox="0 0 18 10"><path d="M6.8 6.2 L9.6 3 L12.4 6.2 Z" fill="#8e8e8e"/></svg><div class="a" style="left:1196px;top:158px;width:11px;height:325px;background:#c1c1c1;"></div><svg class="a" style="left:1192px;top:801.5px;" width="18" height="10" viewBox="0 0 18 10"><path d="M6.8 2.6 L13.2 2.6 L10 6.6 Z" fill="#333333"/></svg><div class="a" style="left:1208px;top:125px;width:1.7px;height:818px;background:#d3d3d3;"></div><div class="a" style="left:2px;top:813px;width:1206px;height:2px;background:#d6d6d6;"></div><div class="a" style="left:2px;top:815px;width:1206px;height:18px;background:#ffffff;"></div><div class="a" style="left:2px;top:832.6px;width:1206px;height:1.2px;background:#d8d8d8;"></div><div class="t" style="left:23.70px;top:819.26px;font-size:11.5px;line-height:11.5px;color:#333333;font-family:'Liberation Sans', sans-serif;transform:scaleX(0.9297);">Ports and Parameters</div><div class="a" style="left:589.2px;top:819.4px;width:1.7px;height:1.7px;background:#444;border-radius:50%;"></div><div class="a" style="left:1192.7px;top:819.4px;width:1.7px;height:1.7px;background:#444;border-radius:50%;"></div><div class="a" style="left:589.2px;top:822.8px;width:1.7px;height:1.7px;background:#444;border-radius:50%;"></div><div class="a" style="left:1192.7px;top:822.8px;width:1.7px;height:1.7px;background:#444;border-radius:50%;"></div><div class="a" style="left:589.2px;top:826.2px;width:1.7px;height:1.7px;background:#444;border-radius:50%;"></div><div class="a" style="left:1192.7px;top:826.2px;width:1.7px;height:1.7px;background:#444;border-radius:50%;"></div><div class="a" style="left:605px;top:815px;width:1px;height:18px;background:#e0e0e0;"></div><div class="t" style="left:626.70px;top:819.26px;font-size:11.5px;line-height:11.5px;color:#333333;font-family:'Liberation Sans', sans-serif;transform:scaleX(0.9316);">Custom Code</div><div class="a" style="left:2px;top:833.8px;width:1193px;height:29px;background:#f4f4f4;"></div><div class="a" style="left:6.4px;top:837.3px;width:33.3px;height:21.3px;background:#f2f2f2;border:1px solid #ababab;border-radius:3px;box-sizing:border-box;"></div><svg class="a" style="left:10px;top:841px;" width="15" height="15" viewBox="0 0 15 15"><circle cx="7" cy="7.3" r="5.8" fill="#d9f0d9" stroke="#26a03a" stroke-width="1.4"/><path d="M7 3.6 V11 M3.3 7.3 H10.7" stroke="#1f8f30" stroke-width="1.5"/></svg><svg class="a" style="left:29px;top:846px;" width="7" height="5" viewBox="0 0 7 5"><path d="M0.5 0.8 L6 0.8 L3.25 4 Z" fill="#404040"/></svg><div class="a" style="left:44.2px;top:837.3px;width:23.4px;height:21.3px;background:#f0f0f0;border:1px solid #dedede;border-radius:3px;box-sizing:border-box;"></div><svg class="a" style="left:49px;top:842px;" width="14" height="13" viewBox="0 0 14 13"><rect x="0.6" y="0.6" width="12" height="11.5" fill="#f3d2d2" stroke="#e4aaaa" stroke-width="0.9"/><path d="M2.5 2.5 L10.7 10.2 M10.7 2.5 L2.5 10.2" stroke="#e09c9c" stroke-width="0.9"/></svg><div class="a" style="left:71.9px;top:837.3px;width:123.7px;height:18.3px;background:#ffffff;border:1px solid #a9a9a9;box-sizing:border-box;"></div><svg class="a" style="left:75px;top:841px;" width="11" height="10" viewBox="0 0 11 10"><circle cx="4" cy="4" r="2.6" fill="none" stroke="#555" stroke-width="1.2"/><path d="M5.8 5.8 L9.5 9.2" stroke="#444" stroke-width="1.6"/></svg><div class="t" style="left:88.90px;top:842.33px;font-size:10px;line-height:10px;color:#8a8a8a;font-family:'Liberation Sans', sans-serif;transform:scaleX(0.9120);">Search</div><div class="a" style="left:2px;top:862.6px;width:1192px;height:1.3px;background:#c4c4c4;"></div><div class="a" style="left:2px;top:863.9px;width:1192px;height:21.6px;background:#f3f3f3;"></div><div class="a" style="left:2px;top:885.5px;width:1192px;height:1px;background:#c8c8c8;"></div><div class="a" style="left:2px;top:886.5px;width:1192px;height:16.799999999999955px;background:#ffffff;"></div><div class="a" style="left:2px;top:903.3px;width:1192px;height:1px;background:#bdbdbd;"></div><div class="a" style="left:2px;top:904.3px;width:1192px;height:16.799999999999955px;background:#ffffff;"></div><div class="a" style="left:2px;top:921.0999999999999px;width:1192px;height:1px;background:#bdbdbd;"></div><div class="a" style="left:2px;top:922.5px;width:1192px;height:16.799999999999955px;background:#ffffff;"></div><div class="a" style="left:2px;top:939.3px;width:1192px;height:1px;background:#bdbdbd;"></div><div class="a" style="left:2px;top:940.5px;width:1192px;height:2.5px;background:#ffffff;"></div><div class="a" style="left:408px;top:863.9px;width:1px;height:79px;background:#bdbdbd;"></div><div class="a" style="left:610.5px;top:863.9px;width:1px;height:79px;background:#bdbdbd;"></div><div class="a" style="left:813px;top:863.9px;width:1px;height:79px;background:#bdbdbd;"></div><div class="a" style="left:1015px;top:863.9px;width:1px;height:79px;background:#bdbdbd;"></div><div class="a" style="left:1194px;top:862.6px;width:1px;height:80px;background:#c4c4c4;"></div><div class="a" style="left:813.5px;top:922.5px;width:201.5px;height:17.2px;background:#e6e6e6;"></div><div class="a" style="left:813px;top:921.5px;width:202px;height:1px;background:#a8a8a8;"></div><div class="a" style="left:813px;top:939.3px;width:202px;height:1.2px;background:#a8a8a8;"></div><div class="a" style="left:2px;top:863px;width:1px;height:80px;background:#c8c8c8;"></div><div class="t" style="left:5.90px;top:870.73px;font-size:10px;line-height:10px;color:#1a1a1a;font-family:'Liberation Sans', sans-serif;font-weight:700;transform:scaleX(0.9798);">Name</div><div class="t" style="left:410.60px;top:870.73px;font-size:10px;line-height:10px;color:#1a1a1a;font-family:'Liberation Sans', sans-serif;font-weight:700;transform:scaleX(0.9295);">Scope</div><div class="t" style="left:613.40px;top:870.73px;font-size:10px;line-height:10px;color:#1a1a1a;font-family:'Liberation Sans', sans-serif;font-weight:700;transform:scaleX(0.9902);">Data Type</div><div class="t" style="left:815.70px;top:870.73px;font-size:10px;line-height:10px;color:#1a1a1a;font-family:'Liberation Sans', sans-serif;font-weight:700;transform:scaleX(0.9526);">Dimensions</div><div class="t" style="left:1018.00px;top:870.73px;font-size:10px;line-height:10px;color:#1a1a1a;font-family:'Liberation Sans', sans-serif;font-weight:700;transform:scaleX(0.9510);">Unit</div><div class="t" style="left:5.50px;top:891.03px;font-size:10px;line-height:10px;color:#444444;font-family:'Liberation Sans', sans-serif;">pressureIn</div><div class="t" style="left:411.00px;top:891.03px;font-size:10px;line-height:10px;color:#444444;font-family:'Liberation Sans', sans-serif;">input</div><div class="t" style="left:613.50px;top:891.03px;font-size:10px;line-height:10px;color:#444444;font-family:'Liberation Sans', sans-serif;">double</div><div class="t" style="left:816.00px;top:891.03px;font-size:10px;line-height:10px;color:#444444;font-family:'Liberation Sans', sans-serif;">[1,1]</div><div class="t" style="left:5.50px;top:909.03px;font-size:10px;line-height:10px;color:#444444;font-family:'Liberation Sans', sans-serif;">torqueOut</div><div class="t" style="left:411.00px;top:909.03px;font-size:10px;line-height:10px;color:#444444;font-family:'Liberation Sans', sans-serif;">output</div><div class="t" style="left:613.50px;top:909.03px;font-size:10px;line-height:10px;color:#444444;font-family:'Liberation Sans', sans-serif;">double</div><div class="t" style="left:816.00px;top:909.03px;font-size:10px;line-height:10px;color:#444444;font-family:'Liberation Sans', sans-serif;">[1,1]</div><div class="t" style="left:5.50px;top:927.03px;font-size:10px;line-height:10px;color:#444444;font-family:'Liberation Sans', sans-serif;">p_db</div><div class="t" style="left:411.00px;top:927.03px;font-size:10px;line-height:10px;color:#444444;font-family:'Liberation Sans', sans-serif;">parameter</div><div class="t" style="left:613.50px;top:927.03px;font-size:10px;line-height:10px;color:#444444;font-family:'Liberation Sans', sans-serif;">double</div><div class="t" style="left:816.00px;top:927.03px;font-size:10px;line-height:10px;color:#444444;font-family:'Liberation Sans', sans-serif;">-1</div><div class="a" style="left:1195px;top:833.8px;width:13px;height:109px;background:#f0f0f0;"></div><svg class="a" style="left:1192px;top:836px;" width="18" height="9" viewBox="0 0 18 9"><path d="M6.5 6.5 L9.8 3 L13.1 6.5 Z" fill="#a0a0a0"/></svg><div class="a" style="left:1196.5px;top:847px;width:10.5px;height:44px;background:#c2c2c2;"></div><svg class="a" style="left:1192px;top:930.5px;" width="18" height="9" viewBox="0 0 18 9"><path d="M6.8 2.5 L13.2 2.5 L10 6.5 Z" fill="#333333"/></svg><div class="a" style="left:2px;top:943px;width:1499px;height:18px;background:#e4e4e4;"></div><div class="a" style="left:2px;top:942.4px;width:1206px;height:1.3px;background:#c8c8c8;"></div><div class="a" style="left:1210px;top:941px;width:291px;height:1px;background:#dedede;"></div><div class="a" style="left:1210px;top:942.5px;width:291px;height:1px;background:#d8d8d8;"></div><div class="a" style="left:1208px;top:943px;width:1px;height:18px;background:#d6d6d6;"></div><svg class="a" style="left:1192px;top:946px;" width="16" height="12" viewBox="0 0 16 12"><path d="M2.5 1.5 L13.5 1.5 L8 7 Z" fill="#8a8a8a"/><rect x="2" y="8.8" width="12" height="1.6" fill="#8a8a8a"/></svg><svg class="a" style="left:1487px;top:946px;" width="12" height="12" viewBox="0 0 12 12"><path d="M2.5 1.2 L8 5.8 L2.5 10.5 Z" fill="#8f8f8f"/><rect x="8.6" y="1" width="1.8" height="10" fill="#8f8f8f"/></svg><div class="a" style="left:1210px;top:125px;width:291px;height:818px;background:#f4f4f4;"></div><div class="a" style="left:1209px;top:125.6px;width:292px;height:18.2px;background:#023f72;"></div><div class="t" style="left:1214.00px;top:130.99px;font-size:11px;line-height:11px;color:#ffffff;font-family:'Liberation Sans', sans-serif;transform:scaleX(0.9761);">Settings</div><div class="a" style="left:1486px;top:130.5px;width:2px;height:2px;background:#ffffff;border-radius:1px;"></div><div class="a" style="left:1486px;top:134px;width:2px;height:2px;background:#ffffff;border-radius:1px;"></div><div class="a" style="left:1486px;top:137.5px;width:2px;height:2px;background:#ffffff;border-radius:1px;"></div><div class="a" style="left:1210px;top:143.8px;width:291px;height:19.5px;background:#ebebeb;"></div><div class="a" style="left:1210px;top:162.8px;width:291px;height:1px;background:#dcdcdc;"></div><div class="a" style="left:1214px;top:150.3px;width:3px;height:1.8px;background:#c0c0c0;"></div><div class="a" style="left:1214px;top:152.5px;width:3px;height:1.8px;background:#c0c0c0;"></div><div class="a" style="left:1214px;top:154.7px;width:3px;height:1.8px;background:#c0c0c0;"></div><div class="a" style="left:1221.5px;top:144.5px;width:58px;height:19px;background:#e4e4e4;border:1px solid #d2d2d2;border-bottom:none;border-radius:2px 2px 0 0;box-sizing:border-box;"></div><div class="a" style="left:1279.4px;top:143.8px;width:44.8px;height:20px;background:#ffffff;"></div><div class="a" style="left:1324px;top:144px;width:1px;height:19px;background:#d6d6d6;"></div><div class="t" style="left:1228.40px;top:149.93px;font-size:10px;line-height:10px;color:#555555;font-family:'Liberation Sans', sans-serif;transform:scaleX(0.9444);">General</div><div class="t" style="left:1286.70px;top:149.93px;font-size:10px;line-height:10px;color:#333333;font-family:'Liberation Sans', sans-serif;transform:scaleX(0.8998);">FMU</div><div class="a" style="left:1210px;top:163.3px;width:1px;height:780px;background:#dcdcdc;"></div><div class="t" style="left:1217.90px;top:176.93px;font-size:10px;line-height:10px;color:#333333;font-family:'Liberation Sans', sans-serif;transform:scaleX(0.9852);">Add Icon</div><div class="t" style="left:1217.90px;top:199.43px;font-size:10px;line-height:10px;color:#b0b0b0;font-family:'Liberation Sans', sans-serif;transform:scaleX(0.9853);">Image File</div><div class="t" style="left:1217.90px;top:221.83px;font-size:10px;line-height:10px;color:#333333;font-family:'Liberation Sans', sans-serif;transform:scaleX(0.9807);">Author</div><div class="t" style="left:1217.90px;top:243.73px;font-size:10px;line-height:10px;color:#333333;font-family:'Liberation Sans', sans-serif;transform:scaleX(0.9814);">Description</div><div class="t" style="left:1217.90px;top:266.13px;font-size:10px;line-height:10px;color:#333333;font-family:'Liberation Sans', sans-serif;transform:scaleX(0.9857);">Copyright</div><div class="t" style="left:1217.90px;top:288.23px;font-size:10px;line-height:10px;color:#333333;font-family:'Liberation Sans', sans-serif;transform:scaleX(0.9748);">License</div><div class="t" style="left:1217.90px;top:310.73px;font-size:10px;line-height:10px;color:#333333;font-family:'Liberation Sans', sans-serif;transform:scaleX(0.9858);">Save Source Code to FMU</div><div class="t" style="left:1217.90px;top:332.73px;font-size:10px;line-height:10px;color:#333333;font-family:'Liberation Sans', sans-serif;transform:scaleX(0.9821);">Generate 32-bit DLL</div><div class="a" style="left:1366.2px;top:172.5px;width:123.7px;height:17.7px;background:#f3f3f3;border:1px solid #a9a9a9;border-radius:3.5px;box-sizing:border-box;"></div><div class="t" style="left:1370.30px;top:176.93px;font-size:10px;line-height:10px;color:#222222;font-family:'Liberation Sans', sans-serif;transform:scaleX(0.9501);">Off</div><svg class="a" style="left:1477px;top:179px;" width="8" height="5" viewBox="0 0 8 5"><path d="M0.5 0.5 L7.5 0.5 L4 4.2 Z" fill="#333"/></svg><div class="a" style="left:1366.2px;top:194.3px;width:123.7px;height:18px;background:#efefef;border:1px solid #d9d9d9;box-sizing:border-box;"></div><div class="t" style="left:1370.30px;top:198.43px;font-size:10px;line-height:10px;color:#b0b0b0;font-family:'Liberation Sans', sans-serif;transform:scaleX(0.9836);">C:\Users\jobinj\MATLAB\P</div><div class="a" style="left:1366.2px;top:217.3px;width:123.7px;height:17.8px;background:#ffffff;border:1px solid #a3a3a3;box-sizing:border-box;"></div><div class="a" style="left:1366.2px;top:239.2px;width:123.7px;height:17.8px;background:#ffffff;border:1px solid #a3a3a3;box-sizing:border-box;"></div><div class="a" style="left:1366.2px;top:261.6px;width:123.7px;height:17.8px;background:#ffffff;border:1px solid #a3a3a3;box-sizing:border-box;"></div><div class="a" style="left:1366.2px;top:283.3px;width:123.7px;height:17.8px;background:#ffffff;border:1px solid #a3a3a3;box-sizing:border-box;"></div><div class="t" style="left:1370.30px;top:243.33px;font-size:10px;line-height:10px;color:#222222;font-family:'Liberation Sans', sans-serif;transform:scaleX(0.9831);">Simple brake model with d</div><div class="a" style="left:1378.7px;top:309.3px;width:11.3px;height:11.4px;background:#ffffff;border:1px solid #6aa7e8;box-sizing:border-box;"></div><div class="a" style="left:1378.7px;top:331.9px;width:11.3px;height:11.5px;background:#ffffff;border:1px solid #5e5e5e;box-sizing:border-box;"></div></body></html>
